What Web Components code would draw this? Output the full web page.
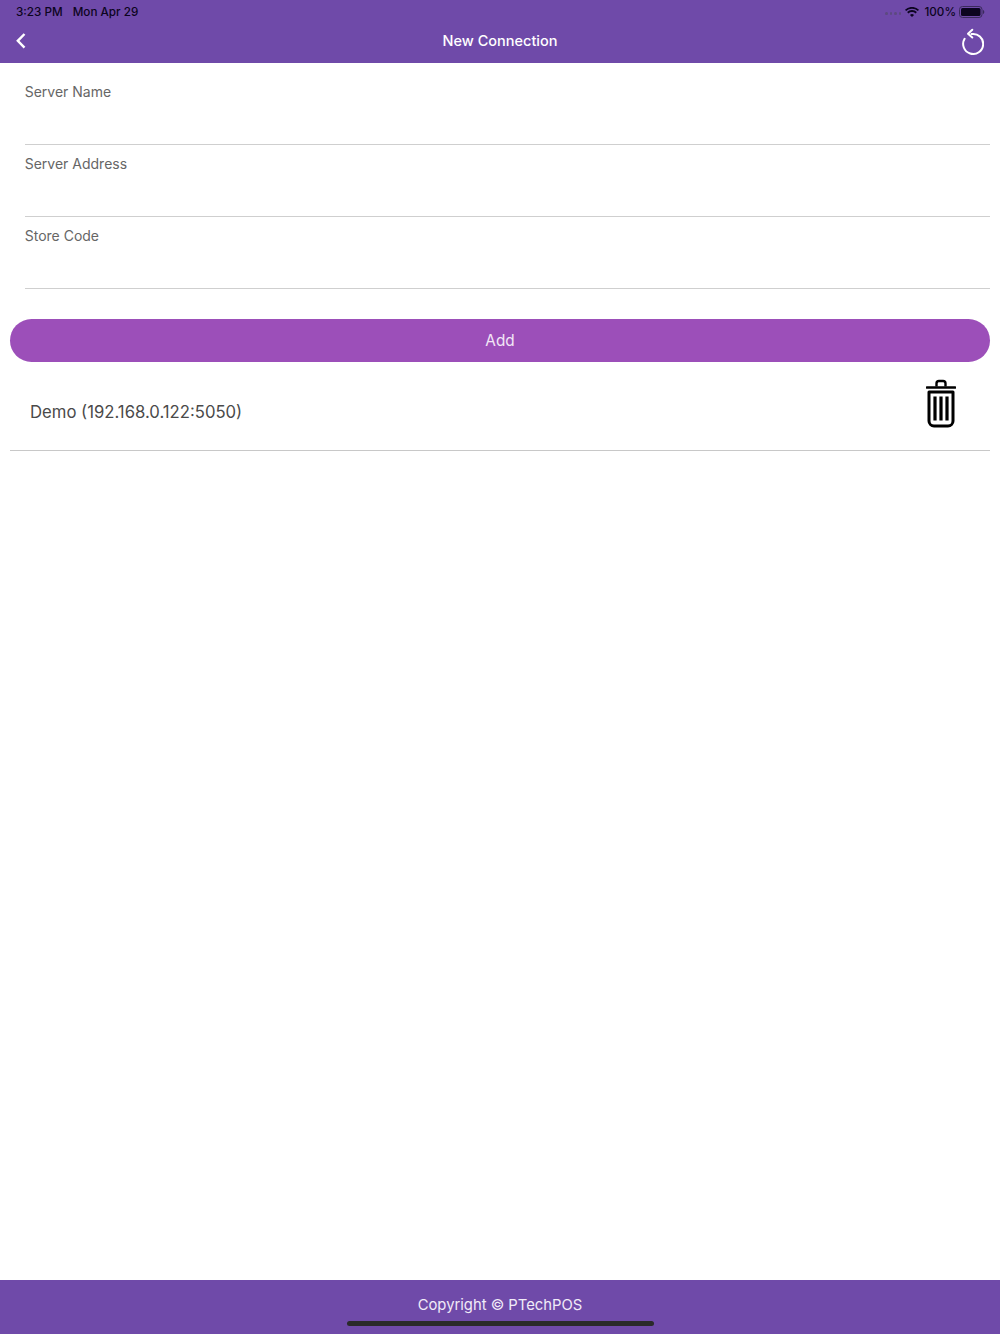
<!DOCTYPE html>
<html><head><meta charset="utf-8"><style>
html,body{margin:0;padding:0;height:100%;background:#fff}
body{font-family:Inter,"Liberation Sans",sans-serif}
app-shell{height:1334px}
</style></head><body>
<app-shell>
  <nav-bar slot="top" title-text="New Connection"></nav-bar>
  <text-field label="Server Name"></text-field>
  <text-field label="Server Address"></text-field>
  <text-field label="Store Code"></text-field>
  <pill-button>Add</pill-button>
  <server-row>Demo (192.168.0.122:5050)</server-row>
  <app-footer slot="bottom">Copyright © PTechPOS</app-footer>
</app-shell>
<script>
function def(name,html,init){customElements.define(name,class extends HTMLElement{constructor(){super();this.attachShadow({mode:'open'}).innerHTML=html;}connectedCallback(){init&&init(this)}})}
def('app-shell',`<style>:host{display:flex;flex-direction:column;width:1000px}
main{flex:1;display:flex;flex-direction:column;padding-top:9px}</style>
<slot name="top"></slot><main><slot></slot></main><slot name="bottom"></slot>`);
def('nav-bar',`<style>:host{display:block;height:62.5px;background:#6f4aa9;position:relative;color:#fff}
.status{height:24px;display:flex;align-items:center;padding:0 15px 0 16px;font-size:11.7px;color:#0c0420;font-weight:450}
.status .sp{flex:1}.date{margin-left:10px}
.dots{display:flex;gap:2px;margin-right:4px}.dots i{width:2.5px;height:3px;border-radius:50%;background:#5d4a80;margin-top:3px}
.bar{height:34px;display:flex;align-items:center;justify-content:space-between;padding:0 16px 0 15px}
.t{font-size:14.5px;font-weight:500;position:absolute;left:0;right:0;text-align:center;top:32px;line-height:18px}
svg{display:block}</style>
<div class="status"><span>3:23 PM</span><span class="date">Mon Apr 29</span><span class="sp"></span>
<span class="dots"><i></i><i></i><i></i><i></i></span>
<svg width="14" height="11" viewBox="0 0 16 12" style="margin-right:5px"><path d="M8 11.2 5.7 8.8a3.3 3.3 0 0 1 4.6 0zM3.900 7 2.400 5.400a8 8 0 0 1 11.200 0L12.100 7a5.900 5.900 0 0 0-8.200 0zM1.300 4.300 0 2.900a11.400 11.400 0 0 1 16 0l-1.300 1.400a9.600 9.600 0 0 0-13.400 0z" fill="#0c0420"/></svg>
<span>100%</span>
<svg width="26" height="12" viewBox="0 0 26 12" style="margin-left:3px"><rect x=".5" y=".5" width="22.500" height="11" rx="3" fill="none" stroke="#3a2a5c"/><rect x="2" y="2" width="19.500" height="8" rx="1.500" fill="#0c0420"/><path d="M24 4v4c.8-.2 1.300-1 1.300-2S24.800 4.200 24 4z" fill="#3a2a5c"/></svg></div>
<div class="bar"><svg width="12" height="18" viewBox="0 0 12 18"><path d="M9.500 2 2.800 8.800l6.700 6.900" fill="none" stroke="#fff" stroke-width="2.400"/></svg>
<svg width="24" height="28" viewBox="0 0 24 28"><path d="M11.500 7.100A10 10 0 1 1 4.600 11.800" fill="none" stroke="#fff" stroke-width="2" stroke-linecap="round"/><path d="M12.300 2.700 8 6.700l4.300 3.800" fill="none" stroke="#fff" stroke-width="2" stroke-linecap="round" stroke-linejoin="round"/></svg></div>
<div class="t" id="t"></div>`,el=>{el.shadowRoot.getElementById('t').textContent=el.getAttribute('title-text')});
def('text-field',`<style>:host{display:block;height:72px;margin:0 10px -1px 25px;border-bottom:1px solid #cfcfcf}
label{display:block;font-size:14px;line-height:20px;color:#666;padding-top:10.5px;margin-left:-.3px}</style><label id="l"></label>`,el=>{el.shadowRoot.getElementById('l').textContent=el.getAttribute('label')});
def('pill-button',`<style>:host{display:flex;align-items:center;justify-content:center;height:43.500px;margin:31px 10px 0;border-radius:22px;background:#9c4fb9;color:#f2e6f6;font-size:15.300px}</style><slot></slot>`);
def('server-row',`<style>:host{display:flex;align-items:center;justify-content:space-between;height:89px;margin:0 10px;padding:0 34px 0 20px;border-bottom:1px solid #c8c8c8;font-size:16.700px;color:#4a4a4a;box-sizing:border-box}
span{margin-top:12px}svg{display:block;margin-top:-6px}</style><span><slot></slot></span>
<svg width="30" height="50" viewBox="0 0 30 50"><path d="M1 9.500h28" stroke="#000" stroke-width="2.600" stroke-linecap="round"/><path d="M10.500 8.500V5.500a2.500 2.500 0 0 1 2.500-2.500h4a2.500 2.500 0 0 1 2.500 2.500v3" fill="none" stroke="#000" stroke-width="2.400"/><path d="M3 14h24v29a5 5 0 0 1-5 5H8a5 5 0 0 1-5-5z" fill="none" stroke="#000" stroke-width="3" stroke-linejoin="round"/><path d="M9 18.500v24M15 18.500v24M21 18.500v24" stroke="#000" stroke-width="3.200"/></svg>`);
def('app-footer',`<style>:host{display:block;height:54px;background:#6f4aa9;position:relative;color:#f1ebf8;font-size:14.800px;text-align:center;line-height:20px;padding-top:15px;box-sizing:border-box}
.h{position:absolute;left:346.500px;width:307px;height:5px;top:41px;border-radius:3px;background:#2a2a2a}</style><slot></slot><div class="h"></div>`);
</script></body></html>
